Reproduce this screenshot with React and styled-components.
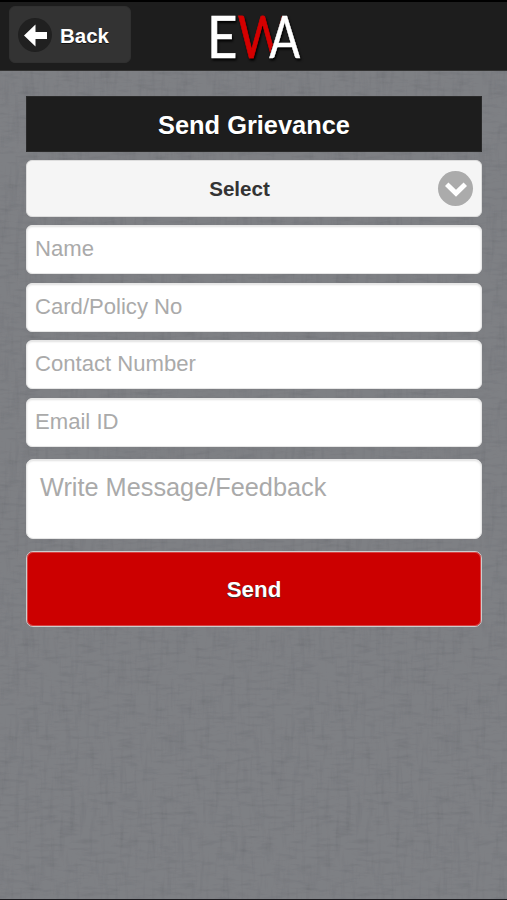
import React, { useState } from 'react';
import styled, { createGlobalStyle } from 'styled-components';

// woven linen, one stretched noise layer per thread direction
const linen = `
<svg xmlns='http://www.w3.org/2000/svg' width='276' height='276'>
<filter id='h' x='0' y='0' width='100%' height='100%' color-interpolation-filters='sRGB'>
<feTurbulence type='fractalNoise' baseFrequency='0.05 0.25' numOctaves='3' seed='4' stitchTiles='stitch'/>
<feColorMatrix values='0 0 0 0 0.3  0 0 0 0 0.31  0 0 0 0 0.33  2 0 0 0 -0.95'/>
</filter>
<filter id='v' x='0' y='0' width='100%' height='100%' color-interpolation-filters='sRGB'>
<feTurbulence type='fractalNoise' baseFrequency='0.2 0.03' numOctaves='3' seed='9' stitchTiles='stitch'/>
<feColorMatrix values='0 0 0 0 0.3  0 0 0 0 0.31  0 0 0 0 0.33  2 0 0 0 -0.95'/>
</filter>
<rect width='276' height='276' filter='url(#h)' opacity='0.2'/>
<rect width='276' height='276' filter='url(#v)' opacity='0.15'/>
</svg>`;

const App = () => {
    const [form, setForm] = useState({ name: '', card: '', contact: '', email: '', message: '' });

    const handleChange = (e) => {
        setForm({ ...form, [e.target.name]: e.target.value });
    };

    return (
        <Page>
            <GlobalStyle />
            <Header>
                <BackButton type='button'>
                    <BackIcon>
                        <svg width='23' height='23' viewBox='0 0 23 23'>
                            <path d='M0 11.5 L11.5 0.5 V8 H23 V15 H11.5 V22.5 Z' fill='#fff' />
                        </svg>
                    </BackIcon>
                    Back
                </BackButton>
                <Logo />
            </Header>
            <Form onSubmit={(e) => e.preventDefault()}>
                <Title>Send Grievance</Title>
                <SelectButton type='button'>
                    Select
                    <SelectIcon>
                        <svg width='22' height='15' viewBox='0 0 22 15'>
                            <path d='M1.7 2.2 L11 11.2 L20.3 2.2' fill='none' stroke='#fff' strokeWidth='5' />
                        </svg>
                    </SelectIcon>
                </SelectButton>
                <Fields>
                    <Input name='name' placeholder='Name' value={form.name} onChange={handleChange} />
                    <Input name='card' placeholder='Card/Policy No' value={form.card} onChange={handleChange} />
                    <Input name='contact' placeholder='Contact Number' value={form.contact} onChange={handleChange} />
                    <Input name='email' placeholder='Email ID' value={form.email} onChange={handleChange} />
                </Fields>
                <Message name='message' placeholder='Write Message/Feedback' value={form.message} onChange={handleChange} />
                <SendButton type='submit'>Send</SendButton>
            </Form>
        </Page>
    )
};

const Logo = () => (
    <LogoSvg width='104' height='68' viewBox='0 0 104 68'>
        <defs>
            <clipPath id='wclip'>
                <path d='M0 0 H83 L66 54 V68 H0 Z' />
            </clipPath>
        </defs>
        <g clipPath='url(#wclip)'>
            <text transform='translate(35.8 51.5) scale(0.82 1)' fill='#d40000' stroke='#d40000' strokeWidth='0.8'>W</text>
        </g>
        <text transform='translate(5 51.5) scale(0.9 1)' fill='#fff' stroke='#fff' strokeWidth='0.7'>E</text>
        <text transform='translate(67.3 51.5) scale(0.78 1)' fill='#fff' stroke='#fff' strokeWidth='0.5'>A</text>
    </LogoSvg>
);

const GlobalStyle = createGlobalStyle`
* {
    box-sizing: border-box;
}

body {
    margin: 0;
    background: #7c7e82;
}

button, input, textarea {
    font-family: "Liberation Sans", Arial, sans-serif;
}
`;

const Page = styled.div`
min-height: 100vh;
font-family: "Liberation Sans", Arial, sans-serif;
background: #7e8084 url("data:image/svg+xml,${encodeURIComponent(linen).replace(/'/g, '%27').replace(/\(/g, '%28').replace(/\)/g, '%29')}");
border-bottom: 1px solid #1c1c20;
`;

const Header = styled.header`
display: grid;
grid-template-columns: 122px 1fr 122px;
align-items: start;
height: 71px;
padding: 4px 9px 0;
background: #1d1d1d;
border-top: 2px solid #000;
border-bottom: 1px solid #333;
`;

const BackButton = styled.button`
display: flex;
align-items: center;
gap: 8px;
height: 57px;
padding: 2px 0 0 8px;
background: #333;
border: 1px solid #303030;
border-radius: 6px;
color: #fff;
font-size: 20.5px;
font-weight: bold;
text-shadow: 0 1px 0 #111;
`;

const BackIcon = styled.span`
display: flex;
align-items: center;
justify-content: center;
width: 34px;
height: 34px;
margin-bottom: 1px;
border-radius: 50%;
background: #202020;
`;

const LogoSvg = styled.svg`
justify-self: center;
margin-bottom: -8px;
overflow: visible;
font-family: Lato, sans-serif;
font-size: 58.5px;
filter: drop-shadow(1px 2px 1px #000);
`;

const Form = styled.form`
display: flex;
flex-direction: column;
padding: 25px 25px 0 26px;
`;

const Title = styled.h1`
margin: 0 0 8px;
height: 56px;
background: #1d1d1d;
border: 1px solid #292929;
color: #fff;
font-size: 25.4px;
line-height: 57px;
text-align: center;
text-shadow: 0 1px 0 #111;
`;

const SelectButton = styled.button`
display: grid;
grid-template-columns: 1fr 35px;
align-items: center;
height: 57px;
margin-bottom: 8px;
padding: 0 8px 0 14px;
background: #f5f5f5;
border: 1px solid #ddd;
border-radius: 6px;
color: #333;
font-size: 20.6px;
font-weight: bold;
text-shadow: 0 1px 0 #f3f3f3;
`;

const SelectIcon = styled.span`
display: flex;
align-items: center;
justify-content: center;
width: 35px;
height: 35px;
border-radius: 50%;
background: #ababab;
margin-bottom: 1px;
padding-top: 2px;
`;

const Fields = styled.div`
display: flex;
flex-direction: column;
gap: 8.5px;
margin-bottom: 12px;
`;

const Input = styled.input`
width: 100%;
height: 49px;
padding: 0 8px 1px;
background: #fff;
border: 1px solid #e6e6e6;
border-radius: 6px;
box-shadow: inset 0 1px 2px rgba(0, 0, 0, 0.12);
color: #333;
font-size: 22.1px;

&::placeholder {
    color: #aaa;
    opacity: 1;
}
`;

const Message = styled.textarea`
display: block;
width: 100%;
height: 80px;
margin-bottom: 12px;
padding: 13px 13px 0;
background: #fff;
border: 1px solid #e6e6e6;
border-radius: 7px;
box-shadow: inset 0 1px 2px rgba(0, 0, 0, 0.12);
color: #333;
font-size: 25.3px;
resize: none;

&::placeholder {
    color: #aaa;
    opacity: 1;
}
`;

const SendButton = styled.button`
height: 76px;
padding-top: 3px;
background: #c00;
border: 1px solid #ccc;
border-radius: 7px;
box-shadow: inset 0 0 0 1px rgba(255, 255, 255, 0.25);
color: #fff;
font-size: 22.3px;
font-weight: bold;
text-shadow: 0 1px 1px #333;
`;

export default App;
